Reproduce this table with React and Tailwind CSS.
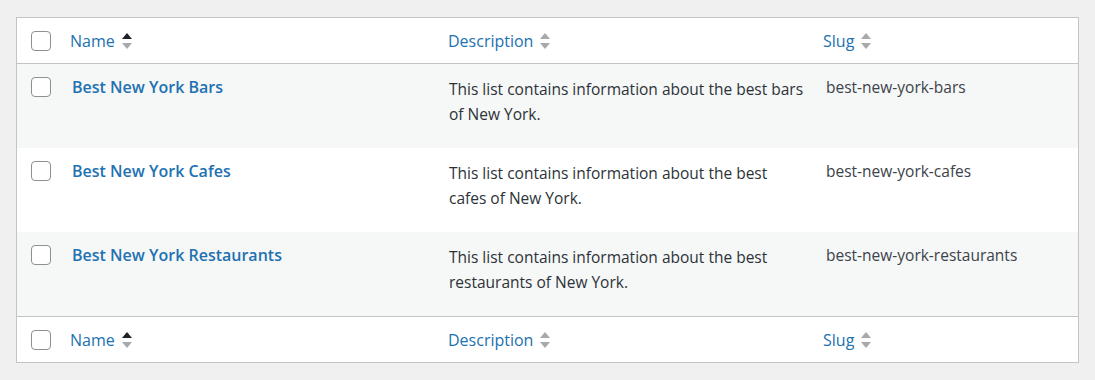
import React from "react";

const rows = [
  {
    name: "Best New York Bars",
    desc: "This list contains information about the best bars of New York.",
    slug: "best-new-york-bars",
  },
  {
    name: "Best New York Cafes",
    desc: "This list contains information about the best cafes of New York.",
    slug: "best-new-york-cafes",
  },
  {
    name: "Best New York Restaurants",
    desc: "This list contains information about the best restaurants of New York.",
    slug: "best-new-york-restaurants",
  },
];

function SortIcon({ active }) {
  return (
    <svg width="12" height="18" viewBox="0 0 12 18" className="ml-[6px] shrink-0">
      <path d="M1 7 L6 1 L11 7 Z" fill={active ? "#1d2327" : "#a7aaad"} />
      <path d="M1 11 L6 17 L11 11 Z" fill="#a7aaad" />
    </svg>
  );
}

function Checkbox() {
  return <span className="block w-[20px] h-[20px] rounded-[4px] border border-[#8c8f94] bg-white" />;
}

function HeaderRow({ className }) {
  return (
    <div className={`grid grid-cols-[44px_377px_375px_1fr] items-center ${className}`}>
      <div className="pl-[14px]"><Checkbox /></div>
      <div className="pl-[9px] flex items-center text-[16px] text-[#2271b1]">
        Name <SortIcon active />
      </div>
      <div className="pl-[10px] flex items-center text-[16px] text-[#2271b1]">
        Description <SortIcon />
      </div>
      <div className="pl-[10px] flex items-center text-[16px] text-[#2271b1]">
        Slug <SortIcon />
      </div>
    </div>
  );
}

export default function App() {
  return (
    <div className="w-[1095px] h-[380px] bg-[#f0f0f1] pt-[17px] px-[16px] font-['Open_Sans',sans-serif]">
      <div className="w-[1063px] border border-[#c3c4c7] bg-white">
        <HeaderRow className="h-[46px] border-b border-[#c3c4c7]" />
        {rows.map((r, i) => (
          <div
            key={r.slug}
            className={`grid grid-cols-[44px_377px_375px_1fr] h-[84px] ${i % 2 === 0 ? "bg-[#f6f7f7]" : "bg-white"}`}
          >
            <div className="pl-[14px] pt-[13px]"><Checkbox /></div>
            <div className="pl-[11px] pt-[12px] text-[16px] font-semibold text-[#2271b1] leading-[22px]">{r.name}</div>
            <div className="pl-[11px] pr-[6px] pt-[13px] text-[15.5px] leading-[24.5px] text-[#2c3338]">{r.desc}</div>
            <div className="pl-[13px] pt-[12px] text-[15.5px] leading-[22px] text-[#3c434a]">{r.slug}</div>
          </div>
        ))}
        <HeaderRow className="h-[46px] border-t border-[#c3c4c7]" />
      </div>
    </div>
  );
}
